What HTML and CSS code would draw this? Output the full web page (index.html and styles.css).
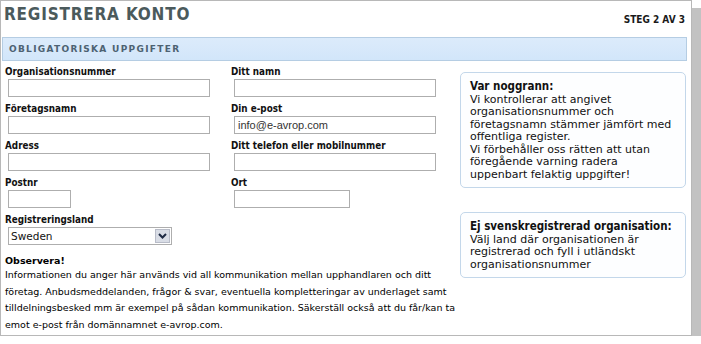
FILE: index.html
```html
<!DOCTYPE html>
<html lang="sv">
<head>
  <meta charset="UTF-8" />
  <title>Registrera konto</title>
  <link rel="stylesheet" href="styles.css">
</head>
<body>

<div class="fonster">
  <div class="huvud">
    <h1>REGISTRERA KONTO</h1>
    <div class="steg">STEG 2 AV 3</div>
  </div>

  <div class="sektion">OBLIGATORISKA UPPGIFTER</div>

  <div class="innehall">
    <div class="formular">
      <div class="rad">
        <div class="falt">
          <label>Organisationsnummer</label>
          <input type="text" class="bred" />
        </div>
        <div class="falt">
          <label>Ditt namn</label>
          <input type="text" class="bred" />
        </div>
      </div>
      <div class="rad">
        <div class="falt">
          <label>Företagsnamn</label>
          <input type="text" class="bred" />
        </div>
        <div class="falt">
          <label>Din e-post</label>
          <input type="text" class="bred" value="info@e-avrop.com" />
        </div>
      </div>
      <div class="rad">
        <div class="falt">
          <label>Adress</label>
          <input type="text" class="bred" />
        </div>
        <div class="falt">
          <label>Ditt telefon eller mobilnummer</label>
          <input type="text" class="bred" />
        </div>
      </div>
      <div class="rad">
        <div class="falt">
          <label>Postnr</label>
          <input type="text" class="kort" />
        </div>
        <div class="falt">
          <label>Ort</label>
          <input type="text" class="mellan" />
        </div>
      </div>
      <div class="falt">
        <label>Registreringsland</label>
        <div class="valj">
          <span>Sweden</span>
          <span class="pil">
            <svg width="9" height="6" viewBox="0 0 9 6"><path d="M1 1 L4.5 4.5 L8 1" fill="none" stroke="#1e2a44" stroke-width="2"/></svg>
          </span>
        </div>
      </div>

      <div class="observera">
        <b>Observera!</b>
        <p>Informationen du anger här används vid all kommunikation mellan upphandlaren och ditt företag. Anbudsmeddelanden, frågor &amp; svar, eventuella kompletteringar av underlaget samt tilldelningsbesked mm är exempel på sådan kommunikation. Säkerställ också att du får/kan ta emot e-post från domännamnet e-avrop.com.</p>
      </div>
    </div>

    <div class="sidokolumn">
      <div class="info">
        <b>Var noggrann:</b><br>
        Vi kontrollerar att angivet<br>
        organisationsnummer och<br>
        företagsnamn stämmer jämfört med<br>
        offentliga register.<br>
        Vi förbehåller oss rätten att utan<br>
        föregående varning radera<br>
        uppenbart felaktig uppgifter!
      </div>
      <div class="info andra">
        <b>Ej svenskregistrerad organisation:</b><br>
        Välj land där organisationen är<br>
        registrerad och fyll i utländskt<br>
        organisationsnummer
      </div>
    </div>
  </div>
</div>

</body>
</html>
```

FILE: styles.css
```css
body {
  margin: 0;
  padding: 0;
  background: #fff;
  font-family: 'DejaVu Sans', Verdana, sans-serif;
  color: #000;
}

.fonster {
  width: 690px;
  height: 334px;
  background: #fff;
  border: 1px solid #b8b8b8;
  box-shadow: 9px 8px 0 #c2c2c2;
  overflow: hidden;
}

.huvud {
  display: flex;
  justify-content: space-between;
  align-items: flex-start;
  padding: 3px 6px 0 3px;
  height: 33px;
}

h1 {
  margin: 0;
  font-family: 'DejaVu Sans Condensed', 'DejaVu Sans', sans-serif;
  font-stretch: condensed;
  font-size: 17px;
  line-height: 20px;
  font-weight: bold;
  letter-spacing: 0.8px;
  color: #4b5a5c;
}

.steg {
  margin-top: 10px;
  font-family: 'DejaVu Sans Condensed', 'DejaVu Sans', sans-serif;
  font-stretch: condensed;
  font-size: 10px;
  font-weight: bold;
  color: #1a1a1a;
}

.sektion {
  margin: 0 4px 0 1px;
  height: 22px;
  line-height: 22px;
  padding-left: 6px;
  background: linear-gradient(#dcebfb, #d2e6fa);
  border: 1px solid #b5cde3;
  font-size: 9px;
  font-weight: bold;
  letter-spacing: 1.3px;
  color: #4d6272;
}

.innehall {
  display: flex;
}

.formular {
  width: 452px;
  padding: 5px 0 0 4px;
}

.rad {
  display: flex;
}

.rad .falt {
  width: 229px;
}

.falt {
  height: 37px;
}

label {
  display: block;
  font-family: 'DejaVu Sans Condensed', 'DejaVu Sans', sans-serif;
  font-stretch: condensed;
  font-size: 9.8px;
  font-weight: bold;
  color: #111;
  height: 13px;
}

input {
  display: block;
  margin: 0 0 0 3px;
  height: 18px;
  box-sizing: border-box;
  border: 1px solid #aeaeae;
  padding: 0 3px;
  font-family: 'Liberation Sans', Arial, sans-serif;
  font-size: 11px;
  color: #333;
}

.bred {
  width: 202px;
}

.kort {
  width: 63px;
}

.mellan {
  width: 116px;
}

.valj {
  display: flex;
  justify-content: space-between;
  align-items: center;
  margin-left: 3px;
  width: 164px;
  height: 18px;
  box-sizing: border-box;
  border: 1px solid #aeaeae;
  padding-left: 2px;
  font-size: 10.5px;
  color: #111;
}

.pil {
  display: flex;
  align-items: center;
  justify-content: center;
  width: 15px;
  height: 14px;
  margin-right: 1px;
  background: #d9dde6;
  border: 1px solid #b8bcc8;
  box-sizing: border-box;
}

.observera {
  margin-top: 4px;
  font-size: 9.5px;
}

.observera p {
  margin: 1px 0 0 0;
  line-height: 16.7px;
}

.sidokolumn {
  padding: 11px 0 0 3px;
}

.info {
  width: 207px;
  border: 1px solid #c3d7ea;
  border-radius: 5px;
  background: #fdfeff;
  padding: 7px 8px 6px 9px;
  font-size: 11px;
  line-height: 12.5px;
  white-space: nowrap;
  color: #111;
}

.info b {
  font-family: 'DejaVu Sans Condensed', 'DejaVu Sans', sans-serif;
  font-stretch: condensed;
  font-size: 11.5px;
}

.andra {
  margin-top: 24px;
}
```
